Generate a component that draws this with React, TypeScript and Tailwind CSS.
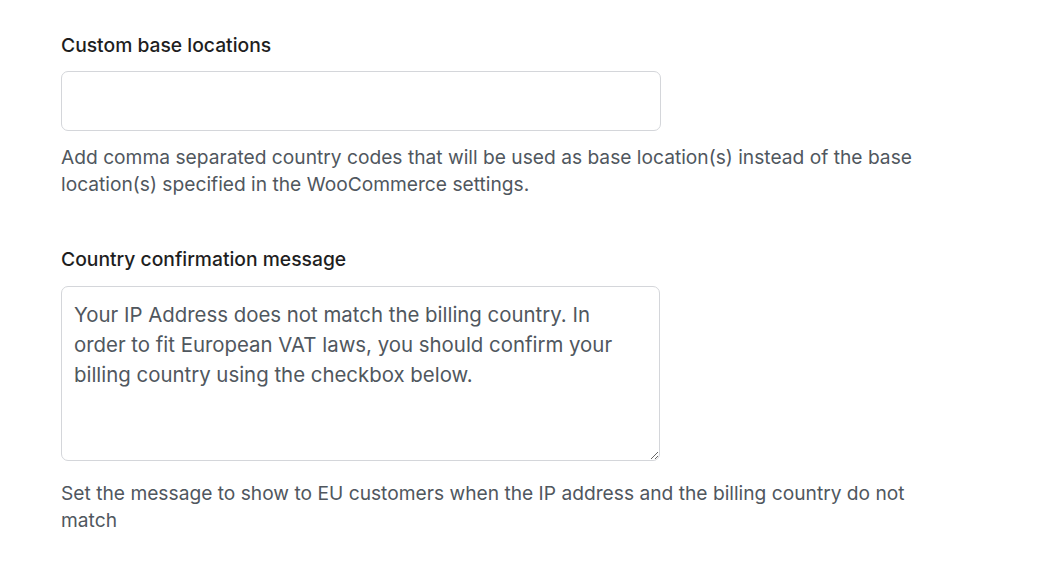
import React from "react";

export default function App() {
  return (
    <div className="w-[1064px] h-[570px] bg-white pl-[61px] pt-[32px]" style={{ fontFamily: "Inter, 'Noto Sans', sans-serif" }}>
      <div className="text-[19.3px] leading-[27px] font-medium text-[#1e1e1e]">Custom base locations</div>
      <input
        type="text"
        className="mt-[12px] block w-[600px] h-[60px] rounded-[7px] border border-[#d4d6da] bg-white outline-none px-3"
      />
      <p className="mt-[13px] w-[880px] text-[19.2px] leading-[27px] text-[#50575e]">
        Add comma separated country codes that will be used as base location(s) instead of the base location(s) specified in the WooCommerce settings.
      </p>
      <div className="mt-[48px] text-[19.3px] leading-[27px] font-medium text-[#1e1e1e]">Country confirmation message</div>
      <textarea
        className="mt-[13px] block w-[599px] h-[175px] rounded-[7px] border border-[#d4d6da] bg-white outline-none pl-[12px] pr-[40px] pt-[13px] text-[20.4px] leading-[30px] text-[#50575e]"
        defaultValue="Your IP Address does not match the billing country. In order to fit European VAT laws, you should confirm your billing country using the checkbox below."
        style={{ fontFamily: "Inter, 'Noto Sans', sans-serif" }}
      />
      <p className="mt-[19px] w-[880px] text-[19.2px] leading-[27px] text-[#50575e]">
        Set the message to show to EU customers when the IP address and the billing country do not match
      </p>
    </div>
  );
}
